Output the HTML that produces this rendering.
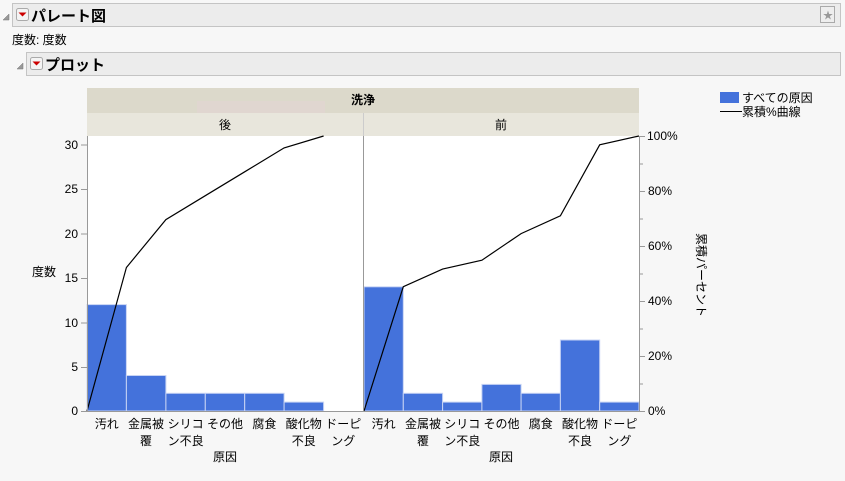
<!DOCTYPE html><html><head><meta charset="utf-8"><style>
body{margin:0;width:845px;height:476px;background:#f7f7f7;overflow:hidden;font-family:"Liberation Sans","Noto Sans CJK JP",sans-serif}
</style></head><body>
<svg width="845" height="476" xmlns="http://www.w3.org/2000/svg" font-family="Liberation Sans, Noto Sans CJK JP, sans-serif" font-size="12">
<rect x="12.5" y="3.5" width="828" height="23" fill="#ececec" stroke="#c4c4c4"/>
<path d="M3 20 L9 14 L9 20Z" fill="#999" stroke="#777" stroke-width=".5"/>
<rect x="16.5" y="8.5" width="12" height="12" rx="2" fill="#f4f4f4" stroke="#aaa"/><path d="M18.5 12.5h8l-4 4z" fill="#c00"/>
<text x="31" y="21" font-size="15" font-weight="bold">パレート図</text>
<rect x="820.5" y="6.5" width="14" height="16" fill="#eee" stroke="#aaa"/><text x="823" y="19" font-size="10" fill="#999">★</text>
<text x="12" y="44" font-size="12">度数: 度数</text>
<rect x="26.5" y="52.5" width="814" height="23" fill="#ececec" stroke="#c4c4c4"/>
<path d="M17 69 L23 63 L23 69Z" fill="#999" stroke="#777" stroke-width=".5"/>
<rect x="30.5" y="57.5" width="12" height="12" rx="2" fill="#f4f4f4" stroke="#aaa"/><path d="M32.5 61.5h8l-4 4z" fill="#c00"/>
<text x="45" y="70" font-size="15" font-weight="bold">プロット</text>
<rect x="87" y="88" width="552" height="25" fill="#dcd9cb"/>
<rect x="197" y="101" width="128" height="12" fill="#e0d6d0"/>
<text x="363" y="104" text-anchor="middle" font-weight="bold" font-size="12">洗浄</text>
<rect x="87" y="113" width="552" height="23" fill="#e8e6dc"/>
<line x1="363.5" y1="113" x2="363.5" y2="136" stroke="#ccc"/>
<text x="225" y="129" text-anchor="middle">後</text><text x="501" y="129" text-anchor="middle">前</text>
<rect x="87" y="136" width="552" height="275" fill="#fff"/>
<g fill="#4472db" stroke="#c8d4f4" stroke-width="1">
<rect x="87" y="304.6" width="39.4" height="106.4"/><rect x="126.4" y="375.5" width="39.5" height="35.5"/><rect x="165.9" y="393.3" width="39.4" height="17.7"/><rect x="205.3" y="393.3" width="39.4" height="17.7"/><rect x="244.7" y="393.3" width="39.4" height="17.7"/><rect x="284.1" y="402.1" width="39.5" height="8.9"/>
<rect x="364" y="286.8" width="39.3" height="124.2"/><rect x="403.3" y="393.3" width="39.3" height="17.7"/><rect x="442.6" y="402.1" width="39.3" height="8.9"/><rect x="481.9" y="384.4" width="39.2" height="26.6"/><rect x="521.1" y="393.3" width="39.3" height="17.7"/><rect x="560.4" y="340" width="39.3" height="71"/><rect x="599.7" y="402.1" width="39.3" height="8.9"/>
</g>
<polyline fill="none" stroke="#000" stroke-width="1.2" points="87,411 126.4,267.5 165.9,219.6 205.3,195.7 244.7,171.8 284.1,147.9 323.6,136"/>
<polyline fill="none" stroke="#000" stroke-width="1.2" points="364,411 403.3,286.7 442.6,269.1 481.9,260.2 521.1,233.6 560.4,215.8 599.7,144.8 639,136"/>
<g stroke="#999"><line x1="87.5" y1="136" x2="87.5" y2="412"/><line x1="363.5" y1="136" x2="363.5" y2="412"/><line x1="639.5" y1="136" x2="639.5" y2="412"/><line x1="87" y1="411.5" x2="639" y2="411.5"/>
<path d="M81 411.5h6M81 367.5h6M81 323h6M81 278.5h6M81 234h6M81 189.5h6M81 145h6"/>
<path d="M639 136.5h6M639 164h4M639 191.5h6M639 219h4M639 246.5h6M639 274h4M639 301.5h6M639 329h4M639 356.5h6M639 384h4M639 411.5h6"/></g>
<g text-anchor="end"><text x="78" y="415">0</text><text x="78" y="371">5</text><text x="78" y="327">10</text><text x="78" y="282">15</text><text x="78" y="238">20</text><text x="78" y="193">25</text><text x="78" y="149">30</text></g>
<text x="32" y="276">度数</text>
<g><text x="647" y="140">100%</text><text x="648" y="195">80%</text><text x="648" y="250">60%</text><text x="648" y="305">40%</text><text x="648" y="360">20%</text><text x="648" y="415">0%</text></g>
<text transform="translate(697,233) rotate(90)" font-size="12">累積パーセント</text>
<rect x="720" y="92" width="19" height="11" fill="#4472db"/><text x="742" y="102">すべての原因</text>
<line x1="720" y1="111.5" x2="742" y2="111.5" stroke="#000"/><text x="742" y="116">累積%曲線</text>
<g text-anchor="middle" font-size="12">
<text x="106.7" y="428">汚れ</text><text x="146" y="428">金属被</text><text x="146" y="445">覆</text><text x="185.6" y="428">シリコ</text><text x="185.6" y="445">ン不良</text><text x="225" y="428">その他</text><text x="264.4" y="428">腐食</text><text x="303.8" y="428">酸化物</text><text x="303.8" y="445">不良</text><text x="343.3" y="428">ドーピ</text><text x="343.3" y="445">ング</text>
<text x="225" y="461">原因</text>
<text x="383.6" y="428">汚れ</text><text x="423" y="428">金属被</text><text x="423" y="445">覆</text><text x="462.3" y="428">シリコ</text><text x="462.3" y="445">ン不良</text><text x="501.5" y="428">その他</text><text x="540.8" y="428">腐食</text><text x="580" y="428">酸化物</text><text x="580" y="445">不良</text><text x="619.4" y="428">ドーピ</text><text x="619.4" y="445">ング</text>
<text x="501" y="461">原因</text>
</g>
</svg>
</body></html>
